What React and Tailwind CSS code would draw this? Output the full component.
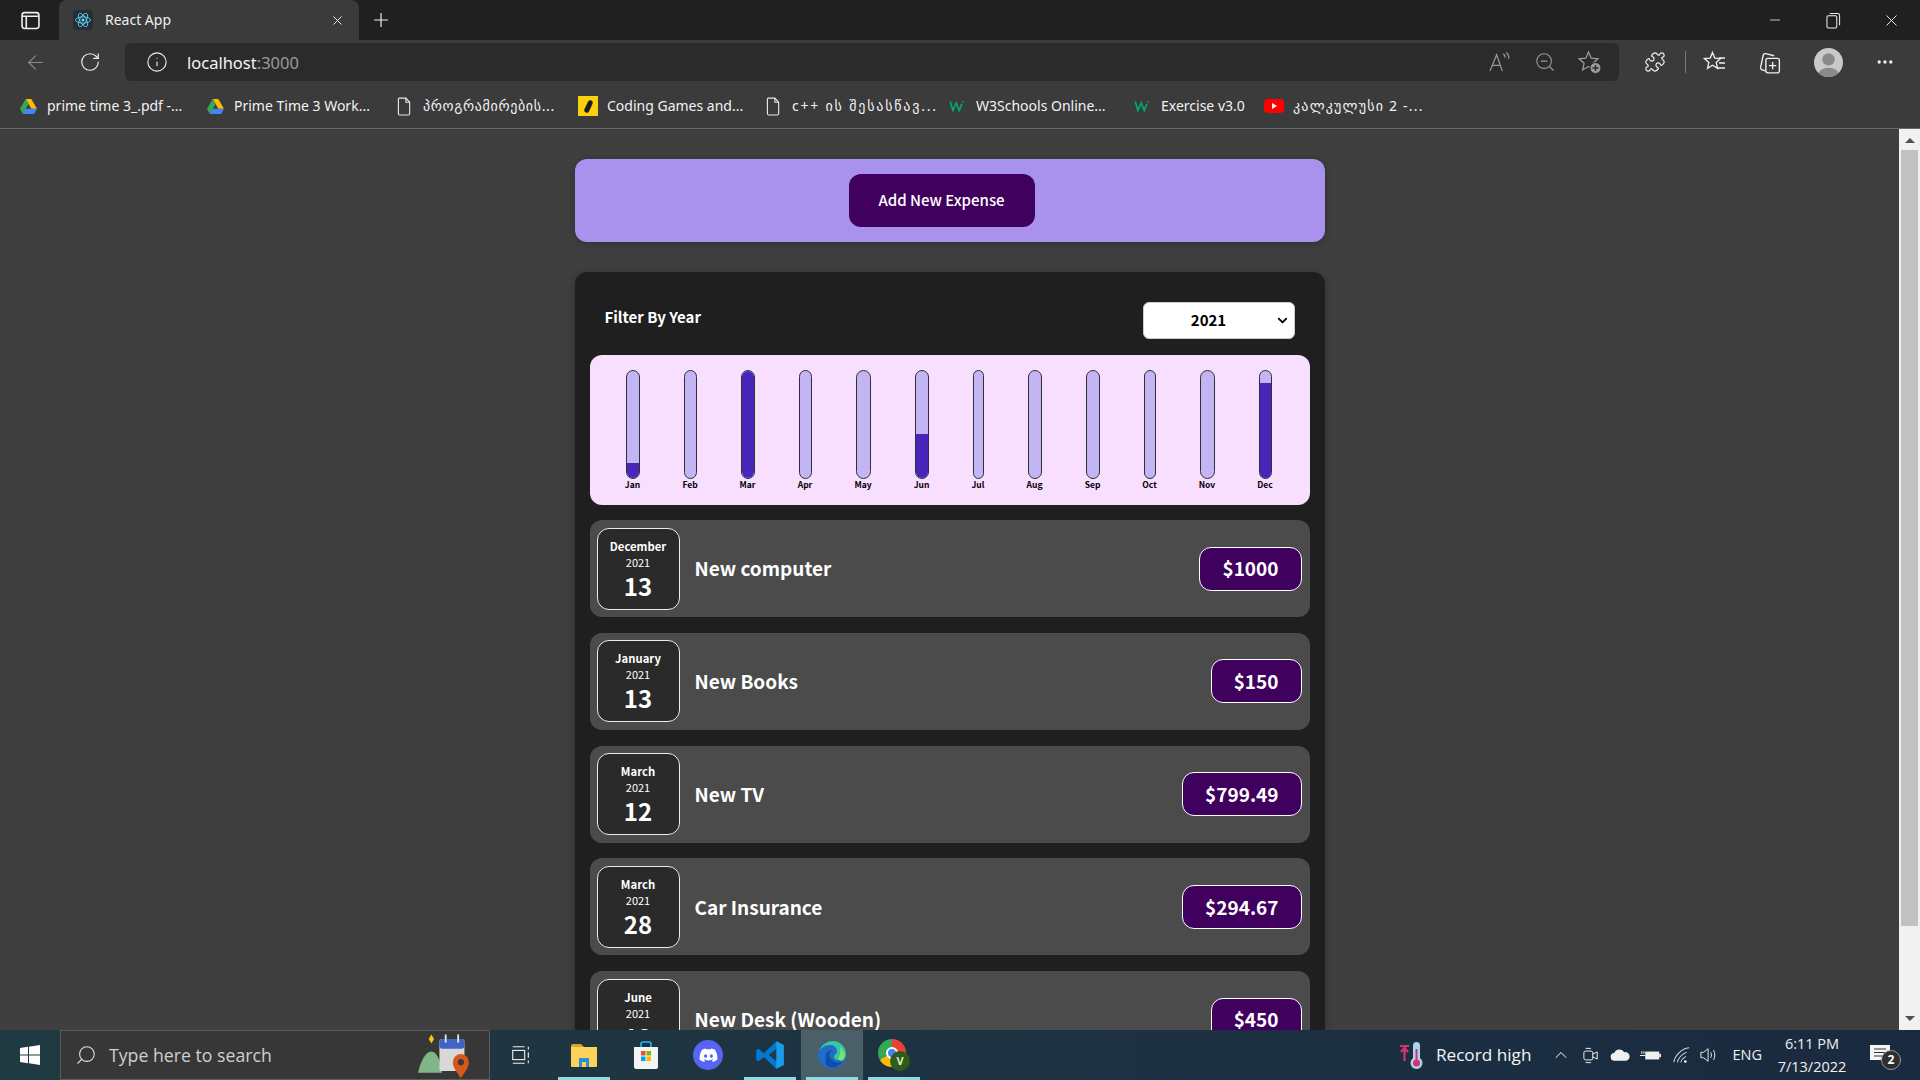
import React from 'react';
import { ArrowLeft, RotateCw, Info, ZoomOut, Puzzle, Plus, X, Minus, MoreHorizontal, Search, ChevronUp, ChevronDown } from 'lucide-react';

const bars = [
  { label: 'Jan', width: 'w-[14px]', fill: 14 },
  { label: 'Feb', width: 'w-[13px]', fill: 0 },
  { label: 'Mar', width: 'w-[14px]', fill: 100 },
  { label: 'Apr', width: 'w-[13px]', fill: 0 },
  { label: 'May', width: 'w-[15px]', fill: 0 },
  { label: 'Jun', width: 'w-[14px]', fill: 41 },
  { label: 'Jul', width: 'w-[11px]', fill: 0 },
  { label: 'Aug', width: 'w-[14px]', fill: 0 },
  { label: 'Sep', width: 'w-[14px]', fill: 0 },
  { label: 'Oct', width: 'w-[12px]', fill: 0 },
  { label: 'Nov', width: 'w-[15px]', fill: 0 },
  { label: 'Dec', width: 'w-[13px]', fill: 89 },
];

const expenses = [
  { month: 'December', day: 13, title: 'New computer', price: '$1000' },
  { month: 'January', day: 13, title: 'New Books', price: '$150' },
  { month: 'March', day: 12, title: 'New TV', price: '$799.49' },
  { month: 'March', day: 28, title: 'Car Insurance', price: '$294.67' },
  { month: 'June', day: 12, title: 'New Desk (Wooden)', price: '$450' },
];

const ReactIcon = () => (
  <span className="flex h-5 w-5 items-center justify-center rounded-sm bg-[#282c34]">
    <svg viewBox="-12 -12 24 24" className="h-[18px] w-[18px]" fill="none" stroke="#61dafb" strokeWidth="1.1">
      <circle r="2" fill="#61dafb" stroke="none" />
      <ellipse rx="10" ry="4.2" />
      <ellipse rx="10" ry="4.2" transform="rotate(60)" />
      <ellipse rx="10" ry="4.2" transform="rotate(120)" />
    </svg>
  </span>
);

const DriveIcon = () => (
  <svg viewBox="0 0 20 18" className="h-[17px] w-[19px]">
    <path d="M7 1h6l6 10.5h-6z" fill="#fbbc04" />
    <path d="M7 1 1 11.5 4 17l6-10.5z" fill="#34a853" />
    <path d="M4 17h12l3-5.5H7z" fill="#4285f4" />
  </svg>
);

const DocIcon = () => (
  <svg viewBox="0 0 16 20" className="h-[19px] w-[15px]" fill="none" stroke="#e8e8e8" strokeWidth="1.2">
    <path d="M2.5 1h7l4 4.5V17.5a1.5 1.5 0 0 1-1.5 1.5H3a1.5 1.5 0 0 1-1.5-1.5V2A1 1 0 0 1 2.5 1z" />
    <path d="M9.5 1v4.5h4" />
  </svg>
);

const W3Icon = () => (
  <svg viewBox="0 0 20 16" className="h-[12px] w-[16px]" fill="none" stroke="#04aa6d" strokeWidth="2.2">
    <path d="M1 2l3.5 12L9 4l4 10 3.5-9" />
    <path d="M17 1.5l2 2" strokeWidth="1.4" />
  </svg>
);

const Bookmark = ({ icon, text, width, ml }) => (
  <div className={`flex items-center ${ml}`}>
    <span className="flex w-[20px] items-center justify-center">{icon}</span>
    <span className={`-mt-[2px] ml-[9px] overflow-hidden whitespace-nowrap text-[14px] text-[#f2f2f2] ${width}`}>{text}</span>
  </div>
);

function BrowserChrome() {
  return (
    <div className="shrink-0 font-['Noto_Sans','DejaVu_Sans',sans-serif]">
      <div className="flex h-10 items-end bg-[#202020]">
        <span className="flex h-10 w-[59px] items-center justify-center">
          <svg viewBox="0 0 18 18" className="ml-[2px] h-[19px] w-[19px]" fill="none" stroke="#f0f0f0" strokeWidth="1.5">
            <rect x="1" y="1.5" width="16" height="15" rx="2.5" />
            <path d="M1 5h16M5 5v11" />
          </svg>
        </span>
        <div className="flex h-10 w-[300px] items-center rounded-t-lg bg-[#3b3b3b] pl-[14px] pr-[14px]">
          <ReactIcon />
          <span className="-mt-[2px] ml-3 text-[14px] text-[#f0f0f0]">React App</span>
          <X className="ml-auto h-[15px] w-[15px] text-[#eeeeee]" strokeWidth={1.5} />
        </div>
        <span className="flex h-10 w-[44px] items-center justify-center">
          <Plus className="h-[22px] w-[22px] text-[#f0f0f0]" strokeWidth={1.3} />
        </span>
        <div className="ml-auto flex h-10 items-center">
          <span className="flex w-[58px] justify-center"><Minus className="h-[16px] w-[16px] text-[#eeeeee]" strokeWidth={1.2} /></span>
          <span className="flex w-[58px] justify-center">
            <svg viewBox="0 0 16 18" className="h-[17px] w-[15px]" fill="none" stroke="#eeeeee" strokeWidth="1.1">
              <rect x="1" y="4" width="10.5" height="13" rx="1.5" />
              <path d="M4 1.5h8.5a2 2 0 0 1 2 2V14" />
            </svg>
          </span>
          <span className="flex w-[58px] justify-center"><X className="h-[19px] w-[19px] text-[#eeeeee]" strokeWidth={1.2} /></span>
        </div>
      </div>

      <div className="flex h-11 items-center bg-[#3b3b3b]">
        <span className="flex w-[70px] justify-center"><ArrowLeft className="h-[23px] w-[23px] text-[#8a8a8a]" strokeWidth={1.2} /></span>
        <span className="flex w-[40px] justify-center"><RotateCw className="h-[22px] w-[22px] text-[#f0f0f0]" strokeWidth={1.3} /></span>
        <div className="ml-[15px] flex h-[38px] w-[1494px] items-center rounded-md bg-[#2b2b2b]">
          <Info className="ml-[21px] h-[22px] w-[22px] text-[#eeeeee]" strokeWidth={1.2} />
          <span className="ml-[19px] mt-[3px] text-[16.5px] text-[#f4f4f4]">localhost<span className="text-[#9a9a9a]">:3000</span></span>
          <div className="ml-auto flex items-center pr-[7px] text-[#9a9a9a]">
            <span className="flex w-[45px] justify-center">
              <svg viewBox="0 0 24 24" className="h-[23px] w-[23px]" fill="none" stroke="#9a9a9a" strokeWidth="1.3">
                <path d="M2 21 9 4l6 17M4.5 15h9" />
                <path d="M16 3c1.5 1 2 2.5 1.8 4M19 1.5c2 1.500 3 4 2.500 6.500" />
              </svg>
            </span>
            <span className="flex w-[45px] justify-center"><ZoomOut className="h-[22px] w-[22px]" strokeWidth={1.2} /></span>
            <span className="flex w-[45px] justify-center">
              <svg viewBox="0 0 24 24" className="h-[24px] w-[24px]" fill="none" stroke="#9a9a9a" strokeWidth="1.3">
                <path d="M10.500 2l2.700 6.200 6.800.6-5.100 4.500 1.500 6.700-5.900-3.500-5.900 3.500 1.500-6.700L1 8.800l6.800-.6z" />
                <circle cx="17.500" cy="18" r="5.500" fill="#9a9a9a" stroke="#2b2b2b" strokeWidth="1" />
                <path d="M17.500 15v6M14.500 18h6" stroke="#2b2b2b" strokeWidth="1.4" />
              </svg>
            </span>
          </div>
        </div>
        <span className="ml-[17px] flex w-[38px] justify-center"><Puzzle className="h-[22px] w-[22px] text-[#f0f0f0]" strokeWidth={1.3} /></span>
        <span className="ml-[11px] h-[22px] w-px bg-[#777777]" />
        <span className="ml-[9px] flex w-[40px] justify-center">
          <svg viewBox="0 0 24 24" className="h-[24px] w-[24px]" fill="none" stroke="#f0f0f0" strokeWidth="1.3">
            <path d="M9.5 2.5l2.3 5.6 5.7.5-4.3 3.800 1.300 5.900-5-3-5 3 1.300-5.900L1.500 8.600l5.700-.5z" />
            <path d="M16 8h6M16 13h6M14 18h8" />
          </svg>
        </span>
        <span className="ml-[14px] flex w-[40px] justify-center">
          <svg viewBox="0 0 24 24" className="h-[25px] w-[25px]" fill="none" stroke="#f0f0f0" strokeWidth="1.3">
            <path d="M8 20 5 19a2 2 0 0 1-1.500-2.500L6 5a2 2 0 0 1 2.500-1.500l8 2" />
            <rect x="8.500" y="8" width="13" height="14" rx="2" />
            <path d="M15 11.500v7M11.500 15h7" />
          </svg>
        </span>
        <span className="ml-[25px] flex h-[29px] w-[29px] items-end justify-center overflow-hidden rounded-full bg-[#c9c9c9]">
          <svg viewBox="0 0 28 28" className="h-[29px] w-[29px]" fill="#8a8a8a">
            <circle cx="14" cy="11" r="6" />
            <ellipse cx="14" cy="26" rx="10" ry="7" />
          </svg>
        </span>
        <span className="ml-[27px] flex w-[30px] justify-center"><MoreHorizontal className="h-[20px] w-[20px] text-[#f0f0f0]" strokeWidth={2} /></span>
      </div>

      <div className="flex h-[45px] items-center border-b border-[#6a6a6a] bg-[#3b3b3b] pl-[18px]">
        <Bookmark icon={<DriveIcon />} text="prime time 3_.pdf -..." width="w-[138px]" ml="" />
        <Bookmark icon={<DriveIcon />} text="Prime Time 3 Work..." width="w-[137px]" ml="ml-[20px]" />
        <Bookmark icon={<DocIcon />} text="პროგრამირების..." width="w-[133px] tracking-[0.65px]" ml="ml-[23px]" />
        <Bookmark icon={<span className="flex h-[20px] w-[20px] items-center justify-center bg-[#fdd00c]"><span className="h-[13px] w-[5px] rotate-[25deg] rounded-full bg-[#1c1c1c]" /></span>} text="Coding Games and..." width="w-[137px]" ml="ml-[22px]" />
        <Bookmark icon={<DocIcon />} text="c++ ის შესასწავ..." width="w-[146px] tracking-[1.8px]" ml="ml-[19px]" />
        <Bookmark icon={<W3Icon />} text="W3Schools Online..." width="w-[132px]" ml="ml-[9px]" />
        <Bookmark icon={<W3Icon />} text="Exercise v3.0" width="w-[88px]" ml="ml-[24px]" />
        <Bookmark icon={<span className="flex h-[14px] w-[20px] items-center justify-center rounded-[4px] bg-[#ff0000]"><span className="ml-px border-y-[3.500px] border-l-[5px] border-y-transparent border-l-white" /></span>} text="კალკულუსი 2 -..." width="w-[140px] tracking-[1.2px]" ml="ml-[15px]" />
      </div>
    </div>
  );
}

function ChartBar({ label, width, fill }) {
  return (
    <div className={`flex flex-col items-center ${width}`}>
      <div className="flex h-[109px] w-full flex-col justify-end overflow-hidden rounded-xl border border-[#313131] bg-[#c3b4f3]">
        <div className="w-full bg-[#4826b9]" style={{ height: `${fill}%` }} />
      </div>
      <div className="-mt-[2px] whitespace-nowrap text-[8.500px] font-bold leading-[14px] text-black">{label}</div>
    </div>
  );
}

function ExpenseItem({ month, day, title, price }) {
  return (
    <div className="mb-[15.750px] flex h-[97px] items-center rounded-xl bg-[#4b4b4b] pl-[7px] pr-2">
      <div className="flex h-[82px] w-[83px] shrink-0 flex-col items-center rounded-xl border border-[#ececec] bg-[#2a2a2a] pt-[9px] text-white">
        <div className="text-[11.300px] font-bold leading-[16px]">{month}</div>
        <div className="text-[11px] leading-[17px]">2021</div>
        <div className="text-[24px] font-bold leading-[30px]">{day}</div>
      </div>
      <h2 className="ml-[15px] text-[19px] font-bold text-white">{title}</h2>
      <div className="ml-auto flex h-[44px] items-center rounded-xl border border-white bg-[#40005d] px-[22px] text-[19px] font-bold text-white">{price}</div>
    </div>
  );
}

function Page() {
  return (
    <div className="flex min-h-0 flex-1 overflow-hidden bg-[#3f3f3f] font-['Noto_Sans_CJK_JP','Noto_Sans',sans-serif]">
      <div className="min-w-0 flex-1 overflow-hidden pt-[30px]">
        <div className="mx-auto w-[750px]">
          <div className="flex h-[83px] items-center justify-center rounded-xl bg-[#a892ee] shadow-[0_1px_8px_rgba(0,0,0,0.25)]">
            <button className="mr-4 h-[53px] w-[186px] rounded-xl bg-[#40005d] text-[15px] font-medium text-white">Add New Expense</button>
          </div>
          <div className="mt-[30px] rounded-xl bg-[#1f1f1f] px-[15px] pt-[30px] shadow-[0_1px_8px_rgba(0,0,0,0.25)]">
            <div className="flex h-[37px] items-center justify-between pl-[15px] pr-[15px]">
              <span className="-mt-[6px] text-[15px] font-bold text-white">Filter By Year</span>
              <div className="relative h-[37px] w-[152px]">
                <select defaultValue="2021" className="h-full w-full appearance-none rounded-md border border-[#cccccc] bg-white pr-[20px] text-center text-[15px] font-bold text-black">
                  <option>2022</option>
                  <option>2021</option>
                  <option>2020</option>
                  <option>2019</option>
                </select>
                <ChevronDown className="pointer-events-none absolute right-[5px] top-[11px] h-[15px] w-[15px] text-black" strokeWidth={3} />
              </div>
            </div>
            <div className="mb-[15px] mt-4 flex h-[150px] justify-around rounded-xl bg-[#f8dfff] pl-[14px] pr-[16px] pt-[15px]">
              {bars.map((bar) => <ChartBar key={bar.label} {...bar} />)}
            </div>
            {expenses.map((item) => <ExpenseItem key={item.title} {...item} />)}
          </div>
        </div>
      </div>
      <div className="flex w-[21px] shrink-0 flex-col items-center bg-[#f1f1f1]">
        <span className="mt-[9px] border-x-[5px] border-b-[5px] border-x-transparent border-b-[#505050]" />
        <span className="mt-[7px] h-[776px] w-[17px] bg-[#c1c1c1]" />
        <span className="mt-auto mb-[9px] border-x-[5px] border-t-[5px] border-x-transparent border-t-[#505050]" />
      </div>
    </div>
  );
}

function TaskIcon({ children, underline, active }) {
  return (
    <div className={`relative flex h-[50px] w-[62px] items-center justify-center ${active ? 'bg-[#4a5f68]' : ''}`}>
      {children}
      {underline && <span className="absolute bottom-0 left-[5px] right-[5px] h-[3px] bg-[#8fdde2]" />}
    </div>
  );
}

function Taskbar() {
  return (
    <div className="flex h-[50px] shrink-0 items-center bg-gradient-to-r from-[#203a42] to-[#1a2a40] font-['Open_Sans',sans-serif] text-[#f0f0f0]">
      <span className="flex w-[60px] justify-center">
        <svg viewBox="0 0 20 20" className="h-[20px] w-[20px]" fill="#ffffff">
          <path d="M0 3l8-1.200V9.500H0zM9 1.700 20 0v9.500H9zM0 10.500h8v7.700L0 17zM9 10.500h11V20L9 18.300z" />
        </svg>
      </span>
      <div className="flex h-[50px] w-[430px] items-center border border-[#5c5c5c] bg-[#373737]">
        <Search className="ml-[14px] h-[22px] w-[22px] -scale-x-100 text-[#e0e0e0]" strokeWidth={1.2} />
        <span className="ml-[12px] text-[17.700px] text-[#cfcfcf]">Type here to search</span>
        <svg viewBox="0 0 60 56" className="ml-auto mr-[15px] h-[50px] w-[62px]">
          <path d="M14 10l3-5 3 5-3 5z" fill="#f5c518" />
          <path d="M2 48c3-14 9-24 15-24 6 0 10 10 12 24z" fill="#7fb685" />
          <rect x="26" y="10" width="28" height="36" rx="3" fill="#d8d8d8" />
          <rect x="26" y="10" width="28" height="11" rx="3" fill="#3f66c4" />
          <path d="M33 5v9M47 5v9" stroke="#e8e8e8" strokeWidth="2" />
          <path d="M50 54c-6-9-9-13-9-18a9 9 0 0 1 18 0c0 5-3 9-9 18z" fill="#d8571c" />
          <circle cx="50" cy="36" r="3.500" fill="#3a3a3a" />
        </svg>
      </div>
      <span className="flex w-[61px] justify-center">
        <svg viewBox="0 0 20 24" className="h-[22px] w-[20px]" fill="none" stroke="#f0f0f0" strokeWidth="1.200">
          <rect x="1" y="7" width="13" height="10" />
          <path d="M1 3h13M1 21h13M18 3v3M18 9v6M18 18v3" />
        </svg>
      </span>
      <div className="ml-[2px] flex">
        <TaskIcon underline>
          <svg viewBox="0 0 28 26" className="h-[26px] w-[28px]">
            <path d="M1 4a2 2 0 0 1 2-2h8l3 3H1z" fill="#e0a526" />
            <path d="M1 5h26v19a1 1 0 0 1-1 1H2a1 1 0 0 1-1-1z" fill="#fcd25a" />
            <path d="M9 25v-9h10v9h-3v-5h-4v5z" fill="#2a8fd8" />
          </svg>
        </TaskIcon>
        <TaskIcon>
          <svg viewBox="0 0 26 30" className="h-[30px] w-[26px]">
            <path d="M8 8V4a2 2 0 0 1 2-2h6a2 2 0 0 1 2 2v4" fill="none" stroke="#29b6f6" strokeWidth="1.600" />
            <path d="M1 7h24v20a2 2 0 0 1-2 2H3a2 2 0 0 1-2-2z" fill="#f4f4f4" />
            <rect x="8" y="11" width="4.500" height="4.500" fill="#f25022" />
            <rect x="13.500" y="11" width="4.500" height="4.500" fill="#7fba00" />
            <rect x="8" y="16.500" width="4.500" height="4.500" fill="#00a4ef" />
            <rect x="13.500" y="16.500" width="4.500" height="4.500" fill="#ffb900" />
          </svg>
        </TaskIcon>
        <TaskIcon>
          <span className="flex h-[30px] w-[30px] items-center justify-center rounded-full bg-[#5865f2]">
            <svg viewBox="0 0 24 18" className="h-[14px] w-[19px]" fill="#ffffff">
              <path d="M20 2A19 19 0 0 0 15.500.5l-.6 1.200a17 17 0 0 0-5.800 0L8.500.5A19 19 0 0 0 4 2C1 6.500.3 10.800.6 15a19 19 0 0 0 5.800 3l1.200-2-1.900-1 .5-.4a13 13 0 0 0 11.600 0l.5.4-1.900 1 1.200 2a19 19 0 0 0 5.800-3c.4-4.900-.8-9.200-3.400-13zM8.300 12.500c-1.100 0-2-1-2-2.300s.9-2.300 2-2.300 2 1 2 2.300-.9 2.300-2 2.300zm7.400 0c-1.100 0-2-1-2-2.300s.9-2.300 2-2.300 2 1 2 2.300-.9 2.300-2 2.300z" />
            </svg>
          </span>
        </TaskIcon>
        <TaskIcon underline>
          <svg viewBox="0 0 24 24" className="h-[30px] w-[30px]">
            <path d="M17 1l6 3v16l-6 3L7 13.500 3 17l-2-1V8l2-1 4 3.500z" fill="#0078d4" />
            <path d="M17 1l6 3v16l-6 3z" fill="#1e9be8" />
            <path d="M17 7l-6 5 6 5z" fill="#203a42" />
          </svg>
        </TaskIcon>
        <TaskIcon underline active>
          <svg viewBox="0 0 30 30" className="h-[30px] w-[30px]">
            <circle cx="15" cy="15" r="14" fill="#1e6ec8" />
            <path d="M2 11C5 4 11 1 16 1c7 0 13 6 13 13 0 4-3 6-7 6-3 0-5-1-5-3 0-3 3-2 3-6 0-4-4-6-7-6-5 0-9 3-11 6z" fill="#39c6a5" />
            <path d="M23 7c4 3 6 8 4 12-1 2-3 2-5 1-3-1 3-4 1-13z" fill="#7ce36a" />
            <path d="M9 15c0-4 4-6 7-4-4 0-5 5-1 9 3 3 8 3 11 1-3 5-9 8-14 6 -5-2-3-8-3-12z" fill="#0f4fa8" />
          </svg>
        </TaskIcon>
        <TaskIcon underline>
          <span className="relative h-[32px] w-[32px]">
            <span className="block h-[28px] w-[28px] rounded-full bg-[conic-gradient(#ea4335_0deg_120deg,#fbbc04_120deg_240deg,#34a853_240deg_360deg)]" />
            <span className="absolute left-[8px] top-[8px] h-[12px] w-[12px] rounded-full border-2 border-white bg-[#4285f4]" />
            <span className="absolute bottom-0 right-0 flex h-[20px] w-[20px] items-center justify-center rounded-full bg-[#2f5a1c] text-[11px] font-bold text-[#dfe8c0]">V</span>
          </span>
        </TaskIcon>
      </div>

      <div className="ml-auto flex h-[50px] items-center text-white">
        <svg viewBox="0 0 26 30" className="h-[30px] w-[26px]">
          <path d="M1 6h9M5.500 7v14M2 12l3.500-4 3.500 4" fill="none" stroke="#d6336c" strokeWidth="2.200" />
          <rect x="14" y="2" width="7" height="20" rx="3.500" fill="#a9d3ef" />
          <circle cx="17.500" cy="23" r="6" fill="#a9d3ef" />
          <circle cx="17.500" cy="23" r="3.500" fill="#d6336c" />
          <rect x="16.500" y="9" width="2" height="13" fill="#d6336c" />
        </svg>
        <span className="ml-[11px] text-[17.200px] text-[#f4f4f4]">Record high</span>
        <span className="ml-[20px] flex w-[20px] justify-center"><ChevronUp className="h-[22px] w-[22px]" strokeWidth={1.200} /></span>
        <span className="ml-[9px] flex w-[22px] justify-center">
          <svg viewBox="0 0 18 20" className="h-[19px] w-[16px]" fill="none" stroke="#f0f0f0" strokeWidth="1.100">
            <rect x="1" y="5" width="10" height="10" rx="2" />
            <path d="M11 8.500l5-2.500v8l-5-2.500M3 2h6M3 18h6" />
          </svg>
        </span>
        <span className="ml-[7px] flex w-[22px] justify-center">
          <svg viewBox="0 0 22 14" className="h-[14px] w-[21px]" fill="#f0f0f0">
            <path d="M5 13a4 4 0 0 1-.6-8A6 6 0 0 1 15 4a4.500 4.500 0 0 1 2 9z" />
          </svg>
        </span>
        <span className="ml-[7px] flex w-[24px] justify-center">
          <svg viewBox="0 0 24 14" className="h-[13px] w-[21px]">
            <rect x="6" y="2.500" width="16" height="9" fill="#f0f0f0" />
            <rect x="22" y="5" width="2" height="4" fill="#f0f0f0" />
            <path d="M0 7h6M2 2v3M4.500 2v3" stroke="#f0f0f0" strokeWidth="1.200" fill="none" />
          </svg>
        </span>
        <span className="ml-[8px] flex w-[22px] justify-center">
          <svg viewBox="0 0 20 20" className="h-[17px] w-[17px]" fill="none" stroke="#d8d8d8" strokeWidth="1.200">
            <path d="M1 18C2 10 10 2 19 1M5 18c1-5 6-10 11-12M9 18c.8-3 3-5 6-7" />
            <circle cx="14.500" cy="17" r="1.500" fill="#ffffff" stroke="none" />
          </svg>
        </span>
        <span className="ml-[6px] flex w-[22px] justify-center">
          <svg viewBox="0 0 20 20" className="h-[18px] w-[18px]" fill="none" stroke="#e8e8e8" strokeWidth="1.100">
            <path d="M1 7h3l5-4v14l-5-4H1zM12 7c1 2 1 4 0 6M15 4.500c2 3 2 8 0 11" />
          </svg>
        </span>
        <span className="ml-[12px] text-[14.500px] text-[#f0f0f0]">ENG</span>
        <div className="ml-[10px] flex w-[80px] flex-col items-center text-[14.500px] leading-[23px] text-[#f0f0f0]">
          <span>6:11 PM</span>
          <span>7/13/2022</span>
        </div>
        <div className="relative ml-[18px] mr-[30px] h-[20px] w-[20px]">
          <svg viewBox="0 0 20 18" className="h-[18px] w-[20px]">
            <path d="M0 0h20v15H0z" fill="#f4f4f4" />
            <path d="M4 4h12M4 7.500h12M4 11h12" stroke="#333333" strokeWidth="1" />
          </svg>
          <span className="absolute -bottom-[5px] -right-[11px] flex h-[20px] w-[20px] items-center justify-center rounded-full border border-[#999999] bg-[#2e2e2e] text-[12px] font-bold text-white">2</span>
        </div>
      </div>
    </div>
  );
}

export default function App() {
  return (
    <div className="flex h-screen w-full flex-col overflow-hidden">
      <BrowserChrome />
      <Page />
      <Taskbar />
    </div>
  );
}
